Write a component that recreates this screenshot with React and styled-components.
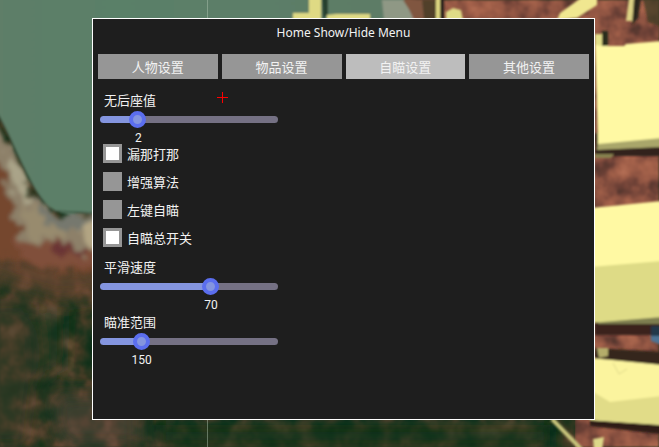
import { useState } from "react";
import styled, { createGlobalStyle } from "styled-components";

const GlobalStyle = createGlobalStyle`
  * {
    box-sizing: border-box;
  }
  body {
    margin: 0;
    background: #24351f;
    color: #f2f2f2;
    font-family: "Noto Sans CJK SC", sans-serif;
    font-size: 13px;
    line-height: 16px;
  }
  button,
  input {
    font: inherit;
    margin: 0;
  }
`;

const Stage = styled.div`
  position: relative;
  min-height: 100vh;
  display: flex;
  padding: 18px 64px 27px 92px;
`;
const Terrain = styled.svg`
  position: absolute;
  inset: 0;
  width: 100%;
  height: 100%;
`;
const Crosshair = styled.svg`
  position: absolute;
  left: 217px;
  top: 92px;
  width: 11px;
  height: 11px;
  pointer-events: none;
`;
const Menu = styled.main`
  position: relative;
  flex: 1;
  min-width: 0;
  padding: 6px 5px;
  border: 1px solid #fff;
  background: #1e1e1e;
`;
const Title = styled.h1`
  margin: 0;
  font-family: "Noto Sans", sans-serif;
  font-size: 12px;
  font-weight: 400;
  line-height: 16px;
  text-align: center;
`;
const Tabs = styled.nav`
  display: flex;
  gap: 4px;
  margin-top: 13px;
`;
const Tab = styled.button`
  flex: 1;
  height: 25px;
  padding: 0;
  border: 0;
  color: #f2f2f2;
  line-height: 25px;
  background: ${({ $active }) => ($active ? "#bdbdbd" : "#969696")};
  cursor: pointer;
`;
const Panel = styled.section`
  display: flex;
  flex-direction: column;
  width: 180px;
  max-width: 100%;
  margin-top: 13px;
  padding-left: 2px;
`;
const Field = styled.div`
  display: flex;
  flex-direction: column;
  height: 55px;
`;
const FieldLabel = styled.label`
  padding-left: 4px;
  line-height: 16px;
`;
const Range = styled.input`
  appearance: none;
  width: 100%;
  height: 17px;
  margin-top: 3px;
  background: none;
  cursor: pointer;

  &::-webkit-slider-runnable-track {
    height: 7px;
    border-radius: 4px;
    background: linear-gradient(#8495df, #8495df) 0 0 / var(--fill) 100% no-repeat #757184;
  }
  &::-webkit-slider-thumb {
    appearance: none;
    width: 17px;
    height: 17px;
    margin-top: -5px;
    border: 4px solid #5b6eee;
    border-radius: 50%;
    background: #8495df;
  }
`;
const Value = styled.output`
  display: flex;
  justify-content: center;
  width: 18px;
  margin-top: 2px;
  font-family: Roboto, sans-serif;
  font-size: 12px;
  line-height: 16px;
`;
const Checks = styled.div`
  display: flex;
  flex-direction: column;
  gap: 9px;
  margin: -3px 0 12px;
  padding-left: 3px;
`;
const CheckLabel = styled.label`
  display: flex;
  align-items: center;
  gap: 5px;
  height: 19px;
  cursor: pointer;
`;
const Check = styled.input`
  appearance: none;
  flex: none;
  width: 19px;
  height: 19px;
  border: 3px solid #969696;
  background: #969696;

  &:checked {
    background: #fff;
  }
`;

const tabs = ["人物设置", "物品设置", "自瞄设置", "其他设置"];
const switches = [
  { name: "漏那打那", on: true },
  { name: "增强算法", on: false },
  { name: "左键自瞄", on: false },
  { name: "自瞄总开关", on: true },
];

function Slider({ id, label, min, max, start }) {
  const [value, setValue] = useState(start);
  const ratio = (value - min) / (max - min);

  return (
    <Field>
      <FieldLabel htmlFor={id}>{label}</FieldLabel>
      <Range
        id={id}
        type="range"
        min={min}
        max={max}
        value={value}
        onChange={(e) => setValue(Number(e.target.value))}
        style={{ "--fill": `${ratio * 100}%` }}
      />
      <Value htmlFor={id} style={{ marginLeft: `calc((100% - 17px) * ${ratio})` }}>
        {value}
      </Value>
    </Field>
  );
}

function Map() {
  return (
    <Terrain viewBox="0 0 659 447" preserveAspectRatio="none" aria-hidden="true">
      <defs>
        <linearGradient id="water" x1="0" y1="0" x2="1" y2="0">
          <stop offset="0" stopColor="#5e7e68" />
          <stop offset="0.3" stopColor="#5a8068" />
          <stop offset="1" stopColor="#5e7c66" />
        </linearGradient>
        <filter id="forest" x="0" y="0" width="100%" height="100%" colorInterpolationFilters="sRGB">
          <feTurbulence type="fractalNoise" baseFrequency="0.05" numOctaves="4" seed="8" />
          <feColorMatrix values="1.7 0 0 0 -0.35  1.5 0.2 0 0 -0.35  1.5 0.2 0 0 -0.35  0 0 0 0 1" />
          <feComponentTransfer>
            <feFuncR type="table" tableValues="0.05 0.1 0.2 0.32 0.44" />
            <feFuncG type="table" tableValues="0.18 0.2 0.22 0.26 0.33" />
            <feFuncB type="table" tableValues="0.09 0.11 0.13 0.17 0.24" />
          </feComponentTransfer>
          <feGaussianBlur stdDeviation="0.8" />
        </filter>
        <filter id="soil" x="0" y="0" width="100%" height="100%" colorInterpolationFilters="sRGB">
          <feTurbulence type="fractalNoise" baseFrequency="0.05" numOctaves="4" seed="3" />
          <feColorMatrix values="1.4 0 0 0 -0.2  1.4 0 0 0 -0.2  1.4 0 0 0 -0.2  0 0 0 0 1" />
          <feComponentTransfer>
            <feFuncR type="table" tableValues="0.3 0.42 0.56 0.64 0.7" />
            <feFuncG type="table" tableValues="0.2 0.25 0.33 0.38 0.43" />
            <feFuncB type="table" tableValues="0.17 0.21 0.26 0.29 0.33" />
          </feComponentTransfer>
          <feGaussianBlur stdDeviation="1" />
        </filter>
        <filter id="rough" x="-20%" y="-20%" width="140%" height="140%">
          <feTurbulence type="fractalNoise" baseFrequency="0.09" numOctaves="3" seed="5" result="n" />
          <feDisplacementMap in="SourceGraphic" in2="n" scale="24" xChannelSelector="R" yChannelSelector="G" />
          <feGaussianBlur stdDeviation="2" />
        </filter>
        <filter id="haze" x="-40%" y="-40%" width="180%" height="180%">
          <feGaussianBlur stdDeviation="9" />
        </filter>
        <filter id="soft">
          <feGaussianBlur stdDeviation="0.8" />
        </filter>
      </defs>

      <rect width="659" height="447" filter="url(#forest)" />
      <rect x="400" y="0" width="259" height="415" filter="url(#soil)" />
      <rect x="575" y="415" width="84" height="32" filter="url(#soil)" />

      {/* broad tints where the forest thins out */}
      <g filter="url(#haze)">
        <path d="M-20 250 H120 V290 L60 300 L-20 275Z" fill="#6b4630" opacity="0.75" />
        <path d="M-20 300 L30 300 L40 350 L30 447 H-20Z" fill="#3f3b2a" opacity="0.5" />
        <path d="M50 395 L140 390 L140 447 H60Z" fill="#5a4a3a" opacity="0.6" />
        <path d="M160 425 H550 V447 H160Z" fill="#14331d" opacity="0.8" />
        <path d="M35 310 L64 306 L62 370 L38 380Z" fill="#17361d" opacity="0.6" />
      </g>

      {/* shore bands, from the inland soil out to the wet sand */}
      <g filter="url(#rough)">
        <path d="M-20 120 L8 170 L20 222 L55 240 L120 232 L120 275 L60 270 L15 262 L-20 255Z" fill="#74462f" />
        <path d="M15 235 L95 240 L95 266 L45 268 L20 256Z" fill="#80503a" />
        <path d="M50 242 L80 246 L82 256 L52 252Z" fill="#6b3634" />
        <path d="M-20 100 L14 150 L30 190 L55 215 L120 205 L120 250 L85 252 L58 240 L24 244 L12 205 L4 168 L-20 150Z" fill="#8d8069" />
        <path d="M5 155 L22 172 L32 196 L28 205 L14 188Z" fill="#aaa489" />
        <path d="M22 205 L60 224 L66 236 L30 240Z" fill="#988b6e" />
        <path d="M76 226 L110 218 L110 254 L86 248Z" fill="#b2a583" />
        <path d="M30 188 L50 214 L92 212 L92 222 L68 232 L44 220Z" fill="#76786e" />
      </g>
      <g filter="url(#soft)">
        <path d="M-5 -5 H405 V25 H100 V214 L78 213 Q58 218 44 201 C34 190 26 172 16 151 C10 138 6 128 -5 110Z" fill="url(#water)" />
        <path d="M-3 113 C7 129 14 148 23 166 S42 204 53 211 T94 213" fill="none" stroke="#384f3d" strokeWidth="1.5" opacity="0.8" />
        <path d="M382 0 H405 L414 20 H384Z" fill="#8f9885" />
        <path d="M403 0 H425 V20 H416Z" fill="#805640" />
        <path d="M422 0 H437 V20 H424Z" fill="#51412c" />
        <path d="M293 13 H309 V-2 H321 V20 H293Z M327 15 L336 14 H370 V20 H327Z" fill="#dfda84" />
        <path d="M322 -2 H328 V14 L323 19Z" fill="#25402f" />
        <path d="M436 -2 H440 V20 H436Z" fill="#e0d982" />
        <path d="M440 -2 H444 V20 H440Z" fill="#2c211a" />
        <path d="M446 18 V12 L453 8 L461 10 L463 20 H446Z" fill="#dedb86" />
        <path d="M557 20 L560 13 L581 -2 H597 V5 L577 18Z" fill="#f0e790" />
        <path d="M629 -2 H634 V21 H626Z" fill="#ddd385" />
        <path d="M634 -2 H641 L638 18 L632 25Z" fill="#29281b" />
        <path d="M643 -2 H662 V27 L648 22Z" fill="#3c3a21" opacity="0.7" />
        <path d="M595 34 H604 L602 46 H595Z" fill="#e3df89" />
        <path d="M602 31 H608 V46 H602Z" fill="#2b2d1c" />

        <path d="M595 133 H662 V156 H595Z" fill="#30201c" />
        <path d="M598 140 L662 134 V147 L597 150Z" fill="#a9a66a" />
        <path d="M595 45 L602 46 L624 46 L626 44 L662 41 V138 L598 144Z" fill="#fff9a3" />
        <path d="M595 154 H614 L611 158 H595Z" fill="#87824f" />

        <path d="M595 318 H662 V335 H595Z" fill="#3a211b" />
        <path d="M595 262 L662 258 V324 H598Z" fill="#7d7d50" />
        <path d="M590 208 L612 206 L662 201 V263 L590 268Z" fill="#fff9a3" />
        <path d="M590 267 L662 261 V317 L590 323Z" fill="#dedb86" />
        <path d="M651 326 H662 V345 L651 341Z" fill="#4e7394" />
        <path d="M651 326 H662 V336 H651Z" fill="#24384a" />

        <path d="M595 348 L662 352 V366 L595 361Z" fill="#34251a" />
        <path d="M597 348 H608 V356 L599 358Z" fill="#b4ad6b" />
        <path d="M590 415 L662 420 V434 L590 426Z" fill="#2e1e18" />
        <path d="M590 358 L612 360 L662 365 V425 L590 420Z" fill="#fbf49e" />
        <path d="M590 390 L610 402 L662 396 V425 L590 420Z" fill="#e1dc88" />
        <path d="M613 363 L619 374 L627 369" fill="none" stroke="#cbc57d" opacity="0.6" />
        <path d="M552 419 L582 450" stroke="#c8c47c" strokeWidth="4" />
        <path d="M593 439 L604 437 L602 450 H594Z" fill="#ddd889" />
      </g>
      <path d="M207 0 H208 V447 H207Z" fill="#b4c7b4" opacity="0.45" />
    </Terrain>
  );
}

function App() {
  const [active, setActive] = useState("自瞄设置");

  return (
    <Stage>
      <GlobalStyle />
      <Map />
      <Menu>
        <Title>Home Show/Hide Menu</Title>
        <Tabs>
          {tabs.map((item) => (
            <Tab key={item} type="button" $active={item === active} onClick={() => setActive(item)}>
              {item}
            </Tab>
          ))}
        </Tabs>
        <Panel>
          <Slider id="recoil" label="无后座值" min={0} max={11} start={2} />
          <Checks>
            {switches.map((item) => (
              <CheckLabel key={item.name}>
                <Check type="checkbox" defaultChecked={item.on} />
                {item.name}
              </CheckLabel>
            ))}
          </Checks>
          <Slider id="smooth" label="平滑速度" min={1} max={110} start={70} />
          <Slider id="reach" label="瞄准范围" min={10} max={700} start={150} />
        </Panel>
      </Menu>
      <Crosshair viewBox="0 0 11 11" aria-hidden="true">
        <path d="M5 0 H6 V11 H5Z M0 5 H11 V6 H0Z" fill="#f00" />
      </Crosshair>
    </Stage>
  );
}

export default App;
